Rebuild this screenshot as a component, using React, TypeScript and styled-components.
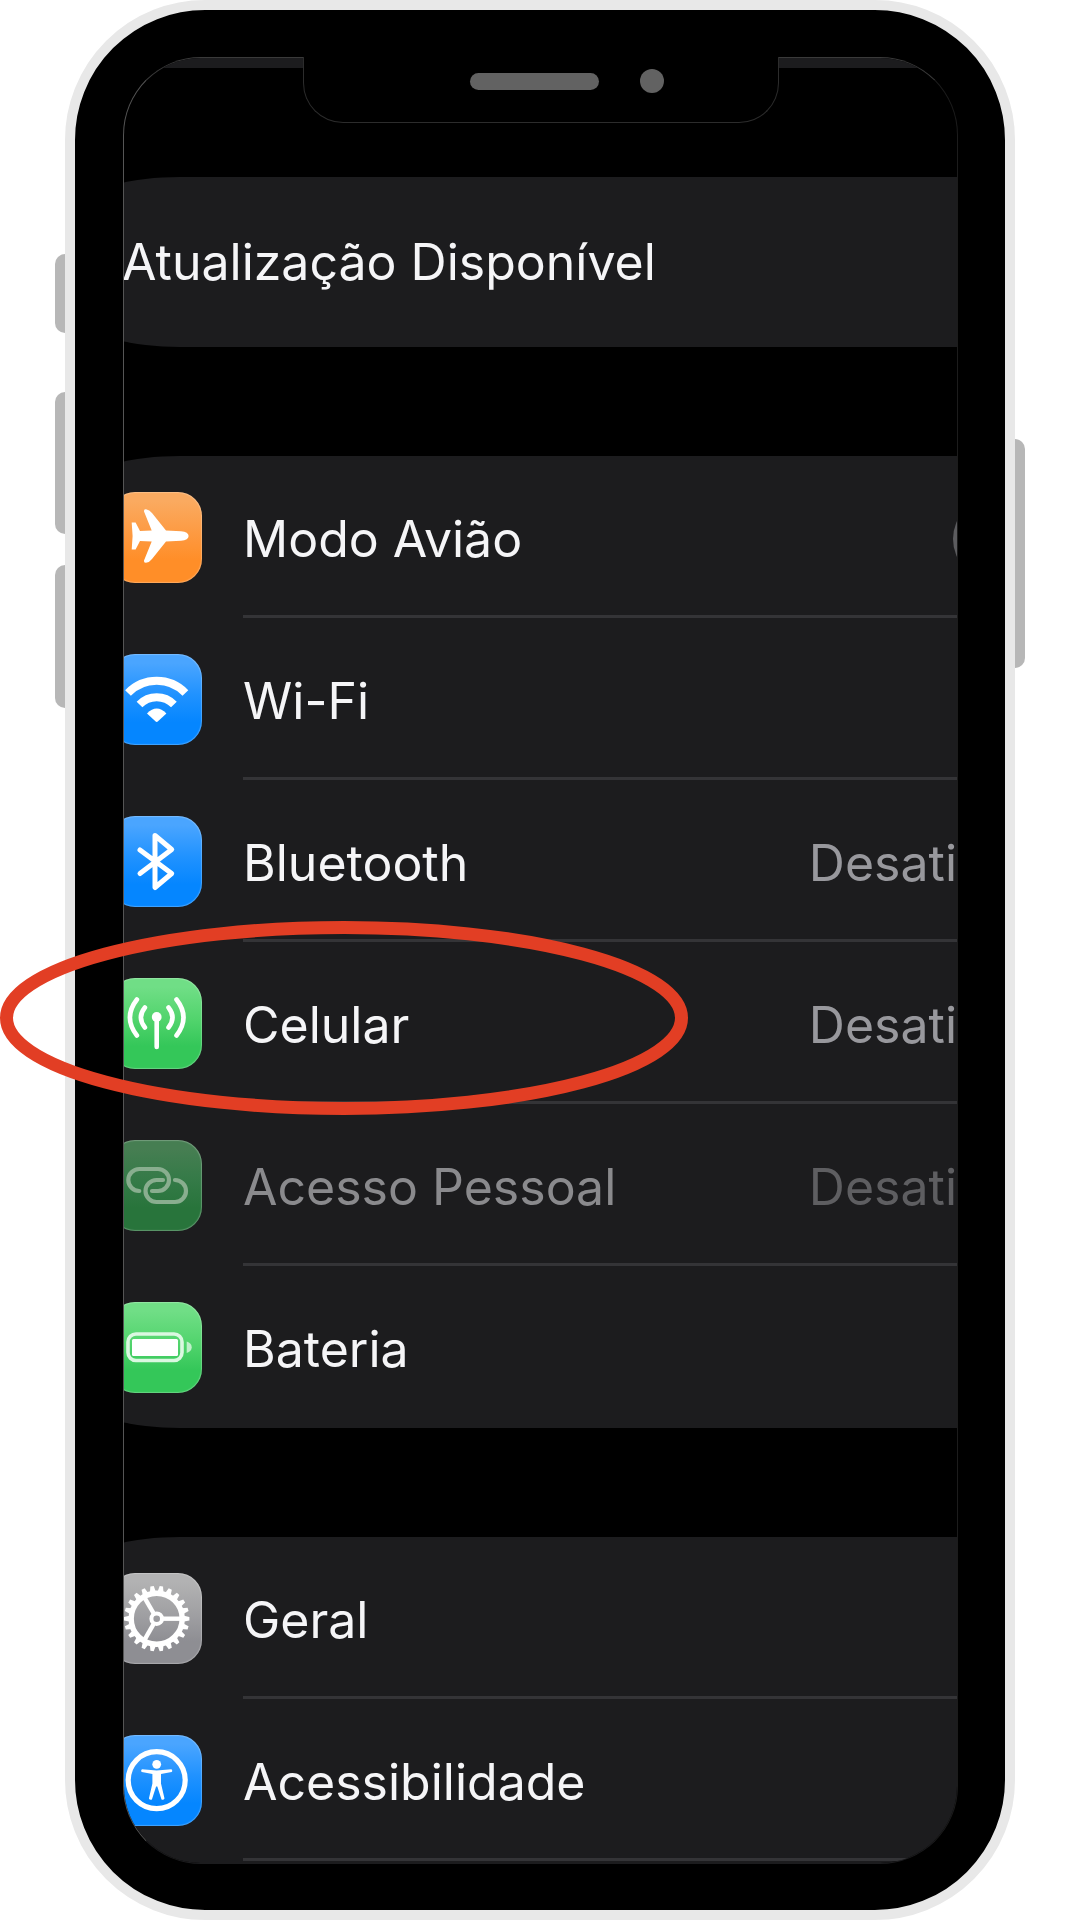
import React from "react";
import styled, { createGlobalStyle, css } from "styled-components";

const GlobalStyle = createGlobalStyle`
  *, *::before, *::after { box-sizing: border-box; }
  body {
    margin: 0;
    background: #ffffff;
    font-family: Inter, Roboto, "Liberation Sans", sans-serif;
  }
`;

const Stage = styled.main`
  padding: 0 55px;
  overflow: hidden;
`;

const Device = styled.div`
  position: relative;
  display: flex;
`;

const Rail = styled.div`
  flex: 0 0 10px;
  display: flex;
  flex-direction: column;
`;

const SideKey = styled.span<{ $before: number; $length: number; $right?: boolean }>`
  flex: none;
  height: ${(p) => p.$length}px;
  margin-top: ${(p) => p.$before}px;
  background: #b7b7b7;
  border-radius: ${(p) => (p.$right ? "0 10px 10px 0" : "10px 0 0 10px")};
`;

const Body = styled.div`
  position: relative;
  flex: 1;
  min-width: 0;
  padding: 47px 47px 46px 48px;
  background: #000000;
  border: 10px solid #e8e8e8;
  border-radius: 140px;
`;

const Screen = styled.div`
  overflow: hidden;
  background: #000000;
  border: 1px solid;
  border-color: #3a3a3a #1c1c1c #1c1c1e #555555;
  border-radius: 78px;
`;

const NotchArea = styled.div`
  position: absolute;
  top: 47px;
  left: 2px;
  right: 0;
  display: flex;
  justify-content: center;
`;

const Notch = styled.div`
  display: flex;
  align-items: center;
  gap: 41px;
  width: 476px;
  height: 66px;
  padding: 0 0 17px 166px;
  background: #000000;
  border: 1px solid #2c2c2c;
  border-top: 0;
  border-radius: 0 0 40px 40px;
`;

const Speaker = styled.span`
  width: 129px;
  height: 17px;
  border-radius: 9px;
  background: #626262;
`;

const Camera = styled.span`
  width: 24px;
  height: 24px;
  border-radius: 50%;
  background: #626262;
`;

const PreviousCard = styled.div`
  height: 10px;
  background: #1c1c1e;
`;

const Card = styled.section<{ $open?: boolean }>`
  margin: 109px 0 0 -34px;
  background: #1c1c1e;
  border-radius: ${(p) => (p.$open ? "90px 0 0 0 / 25px 0 0 0" : "90px 0 0 90px / 25px 0 0 25px")};
  ${(p) => p.$open && css`padding-bottom: 2px;`}
`;

const textStyle = css`
  font-size: 50px;
  font-weight: 400;
  line-height: 60px;
  white-space: nowrap;
`;

const UpdateLink = styled.a`
  display: flex;
  align-items: center;
  height: 170px;
  padding-left: 32px;
  color: #f5f5f7;
  text-decoration: none;
  ${textStyle}
`;

const rowStyle = css`
  display: flex;
  align-items: center;
  gap: 41px;
  height: 162px;
  padding-left: 21px;
  color: #f5f5f7;
  text-decoration: none;
`;

const RowLink = styled.a`
  ${rowStyle}
`;

const RowLabel = styled.label`
  ${rowStyle}
`;

const RowBody = styled.span<{ $last?: boolean }>`
  flex: 1;
  min-width: 0;
  align-self: stretch;
  display: flex;
  align-items: center;
  justify-content: space-between;
  padding-top: 6px;
  border-bottom: 3px solid ${(p) => (p.$last ? "transparent" : "#343437")};
`;

const Name = styled.span<{ $dim?: boolean }>`
  ${textStyle}
  color: ${(p) => (p.$dim ? "#8a8a8d" : "#f5f5f7")};
`;

const Value = styled.span<{ $dim?: boolean }>`
  ${textStyle}
  flex: 0 0 147px;
  color: ${(p) => (p.$dim ? "#5e5e61" : "#98989d")};
`;

const Switch = styled.input`
  appearance: none;
  flex: none;
  width: 140px;
  height: 84px;
  margin: 0 -136px 0 0;
  border-radius: 42px;
  background: #5c5c5f;
`;

const tints = {
  orange: ["#faaa60", "#fd9a42", "#ff8e28"],
  blue: ["#4aa5ff", "#2092ff", "#0586ff"],
  green: ["#70de86", "#52d46d", "#34c759"],
  dimGreen: ["#467e52", "#347a47", "#28743b"],
  gray: ["#b2b2b3", "#a0a0a3", "#8e8e93"],
};

type Tint = keyof typeof tints;

const Tile = styled.span<{ $tint: Tint }>`
  flex: none;
  width: 91px;
  height: 91px;
  border-radius: 24px;
  background: linear-gradient(
    ${(p) => tints[p.$tint][0]} 10%,
    ${(p) => tints[p.$tint][1]} 45%,
    ${(p) => tints[p.$tint][2]} 75%
  );
  box-shadow: inset 0 0 1px 1px rgba(255, 255, 255, 0.25);
`;

const Glyph = styled.svg`
  display: block;
  width: 91px;
  height: 91px;
`;

const Highlight = styled.svg`
  position: absolute;
  top: 921px;
  left: -55px;
  width: 688px;
  height: 194px;
  pointer-events: none;
`;

const Plane = () => (
  <Glyph viewBox="0 0 91 91" fill="#fff" aria-hidden>
    <path d="M33 19.5Q32.6 17 35 17.2Q38.5 17.6 41 21L55 38.6L70 39.2Q77.6 39.8 77.6 44Q77.6 48.2 70 48.8L55 49.4L41 67Q38.5 70.4 35 70.8Q32.6 71 33 68.5L40.7 49.4L29 49L24.6 57.5H20.7L21.6 44L20.7 30.5H24.6L29 39L40.7 38.6Z" />
  </Glyph>
);

const Wifi = () => (
  <Glyph viewBox="0 0 91 91" fill="none" stroke="#fff" strokeWidth="8" aria-hidden>
    <path d="M17 39A40 40 0 0 1 74.400 39" />
    <path d="M28.500 50.500A24 24 0 0 1 62.900 50.500" />
    <path d="M36 59.500Q45.700 49.500 55.400 59.500L47 67.300Q45.700 68.500 44.400 67.300Z" fill="#fff" stroke="none" />
  </Glyph>
);

const Bluetooth = () => (
  <Glyph viewBox="0 0 91 91" fill="none" stroke="#fff" strokeWidth="5" strokeLinecap="round" strokeLinejoin="round" aria-hidden>
    <path d="M29 34L60.700 57.500L44 71.500V19.500L60.700 33.500L29 57.500" />
  </Glyph>
);

const Antenna = () => (
  <Glyph viewBox="0 0 91 91" fill="none" stroke="#fff" strokeWidth="4.600" strokeLinecap="round" aria-hidden>
    <circle cx="45.700" cy="39" r="4.900" fill="#fff" stroke="none" />
    <path d="M45.700 40V69" />
    <path d="M57.500 29.500Q65.500 39.500 57.500 49.500M33.900 29.500Q25.900 39.500 33.900 49.500" />
    <path d="M65.500 21.500Q79.500 39.500 65.500 57.500M25.900 21.500Q11.900 39.500 25.900 57.500" />
  </Glyph>
);

const Chain = () => (
  <Glyph viewBox="0 0 91 91" fill="none" stroke="#89ae8f" strokeWidth="4.200" strokeLinecap="round" aria-hidden>
    <path d="M28.300 51A11 11 0 0 1 28.300 29H47A11 11 0 0 1 47 51H41" />
    <path d="M52 40H45.500A11 11 0 0 0 45.500 62H64A11 11 0 0 0 64 40" />
  </Glyph>
);

const Battery = () => (
  <Glyph viewBox="0 0 91 91" fill="none" aria-hidden>
    <rect x="17" y="32" width="54" height="26.500" rx="8" stroke="#dbf8e1" strokeWidth="3.600" />
    <rect x="21" y="37" width="46" height="17" rx="1.500" fill="#fff" />
    <path d="M75.700 39.500Q80.700 41 80.700 45.300Q80.700 49.600 75.700 51Z" fill="#bff0ca" />
  </Glyph>
);

const teeth = Array.from({ length: 22 }, (_, i) => (i * 360) / 22);

const Gear = () => (
  <Glyph viewBox="0 0 91 91" fill="none" stroke="#fff" aria-hidden>
    <circle cx="45.700" cy="45.700" r="25.500" strokeWidth="5.400" />
    <circle cx="45.700" cy="45.700" r="5.300" strokeWidth="4" />
    {teeth.map((angle) => (
      <path key={angle} d="M72 42.600L78.400 44V47.400L72 48.800Z" fill="#fff" stroke="none" transform={`rotate(${angle} 45.700 45.700)`} />
    ))}
    {[0, 120, 240].map((angle) => (
      <path key={angle} d="M52 45.700H71" strokeWidth="4.400" transform={`rotate(${angle} 45.700 45.700)`} />
    ))}
  </Glyph>
);

const Person = () => (
  <Glyph viewBox="0 0 91 91" fill="#fff" aria-hidden>
    <circle cx="45.700" cy="45.200" r="28.500" fill="none" stroke="#fff" strokeWidth="5.200" />
    <circle cx="45.700" cy="29.300" r="4.400" />
    <path d="M31 34.200L45.700 35.500L60.400 34.200Q62 35.500 60.600 37L50 39V48.500L53.500 63.500Q52.500 65.500 50.500 64.500L46.300 51.500H45.100L40.900 64.500Q38.900 65.500 37.900 63.500L41.400 48.500V39L30.800 37Q29.400 35.500 31 34.200Z" />
  </Glyph>
);

type Item = {
  name: string;
  tint: Tint;
  icon: React.ReactNode;
  value?: string;
  dim?: boolean;
  toggle?: boolean;
};

const connectivity: Item[] = [
  { name: "Modo Avião", tint: "orange", icon: <Plane />, toggle: true },
  { name: "Wi-Fi", tint: "blue", icon: <Wifi /> },
  { name: "Bluetooth", tint: "blue", icon: <Bluetooth />, value: "Desati" },
  { name: "Celular", tint: "green", icon: <Antenna />, value: "Desati" },
  { name: "Acesso Pessoal", tint: "dimGreen", icon: <Chain />, value: "Desati", dim: true },
  { name: "Bateria", tint: "green", icon: <Battery /> },
];

const general: Item[] = [
  { name: "Geral", tint: "gray", icon: <Gear /> },
  { name: "Acessibilidade", tint: "blue", icon: <Person /> },
];

function SettingRow({ item, last }: { item: Item; last?: boolean }) {
  const content = (
    <>
      <Tile $tint={item.tint}>{item.icon}</Tile>
      <RowBody $last={last}>
        <Name $dim={item.dim}>{item.name}</Name>
        {item.value && <Value $dim={item.dim}>{item.value}</Value>}
        {item.toggle && <Switch type="checkbox" role="switch" id="airplane" />}
      </RowBody>
    </>
  );
  return item.toggle ? (
    <RowLabel htmlFor="airplane">{content}</RowLabel>
  ) : (
    <RowLink href="#">{content}</RowLink>
  );
}

export default function App() {
  return (
    <Stage>
      <GlobalStyle />
      <Device>
        <Rail>
          <SideKey $before={254} $length={79} />
          <SideKey $before={59} $length={142} />
          <SideKey $before={31} $length={143} />
        </Rail>
        <Body>
          <Screen>
            <PreviousCard />
            <Card>
              <UpdateLink href="#">Atualização Disponível</UpdateLink>
            </Card>
            <Card>
              {connectivity.map((item, i) => (
                <SettingRow key={item.name} item={item} last={i === connectivity.length - 1} />
              ))}
            </Card>
            <Card $open>
              {general.map((item) => (
                <SettingRow key={item.name} item={item} />
              ))}
            </Card>
          </Screen>
          <NotchArea>
            <Notch>
              <Speaker />
              <Camera />
            </Notch>
          </NotchArea>
        </Body>
        <Rail>
          <SideKey $before={439} $length={229} $right />
        </Rail>
        <Highlight viewBox="0 0 688 194" aria-hidden>
          <ellipse cx="344" cy="97" rx="337.500" ry="90.500" fill="none" stroke="#e23e24" strokeWidth="13" />
        </Highlight>
      </Device>
    </Stage>
  );
}
